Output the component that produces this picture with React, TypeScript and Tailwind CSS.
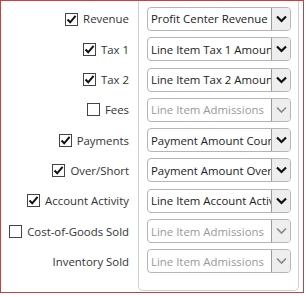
const rows = [
  { label: "Revenue", checked: true, value: "Profit Center Revenue", enabled: true },
  { label: "Tax 1", checked: true, value: "Line Item Tax 1 Amount", enabled: true },
  { label: "Tax 2", checked: true, value: "Line Item Tax 2 Amount", enabled: true },
  { label: "Fees", checked: false, value: "Line Item Admissions", enabled: false },
  { label: "Payments", checked: true, value: "Payment Amount Count", enabled: true },
  { label: "Over/Short", checked: true, value: "Payment Amount Over/Short", enabled: true },
  { label: "Account Activity", checked: true, value: "Line Item Account Activity", enabled: true },
  { label: "Cost-of-Goods Sold", checked: false, value: "Line Item Admissions", enabled: false },
  { label: "Inventory Sold", checked: null, value: "Line Item Admissions", enabled: false },
];

const Check = ({ checked }: { checked: boolean }) => (
  <span className="flex h-[13px] w-[13px] items-center justify-center border border-[#444] bg-white">
    {checked && (
      <svg width="11" height="11" viewBox="0 0 11 11">
        <path d="M1.5 5.5 L4.2 8.3 L9.6 1.8" fill="none" stroke="#111" strokeWidth="2" />
      </svg>
    )}
  </span>
);

const Chevron = ({ enabled }: { enabled: boolean }) => (
  <svg width="11" height="8" viewBox="0 0 11 8">
    <path
      d="M1 1.5 L5.5 6 L10 1.5"
      fill="none"
      stroke={enabled ? "#111" : "#888"}
      strokeWidth={enabled ? 2.2 : 1.6}
    />
  </svg>
);

const App = () => {
  return (
    <div
      className="h-[293px] w-[304px] border border-[#b84848] bg-white text-[11.4px]"
      style={{ fontFamily: '"Open Sans", "Liberation Sans", sans-serif' }}
    >
      <div className="flex h-full">
        <div className="flex w-[137px] flex-col gap-[6.3px] pt-[6px] pr-[9px]">
          {rows.map((r) => (
            <div key={r.label} className="flex h-[24px] items-center justify-end gap-[5px] text-[#333]">
              {r.checked !== null && <Check checked={r.checked} />}
              <span>{r.label}</span>
            </div>
          ))}
        </div>
        <div className="flex h-[290px] w-[161px] flex-col gap-[6.3px] rounded-b-[5px] border-x border-b border-[#cfcfcf] pt-[6px] pl-[8px]">
          {rows.map((r, i) => (
            <div
              key={i}
              className="flex h-[24px] w-[144px] overflow-hidden rounded-[4px] border border-[#b5b5b5] bg-white"
            >
              <div
                className={`flex flex-1 items-center overflow-hidden whitespace-nowrap pl-[3px] ${
                  r.enabled ? "text-[#222]" : "text-[#999]"
                }`}
              >
                {r.value}
              </div>
              <div className="flex w-[19px] items-center justify-center border-l border-[#999] bg-[#eeeeee]">
                <Chevron enabled={r.enabled} />
              </div>
            </div>
          ))}
        </div>
      </div>
    </div>
  );
};

export default App;
